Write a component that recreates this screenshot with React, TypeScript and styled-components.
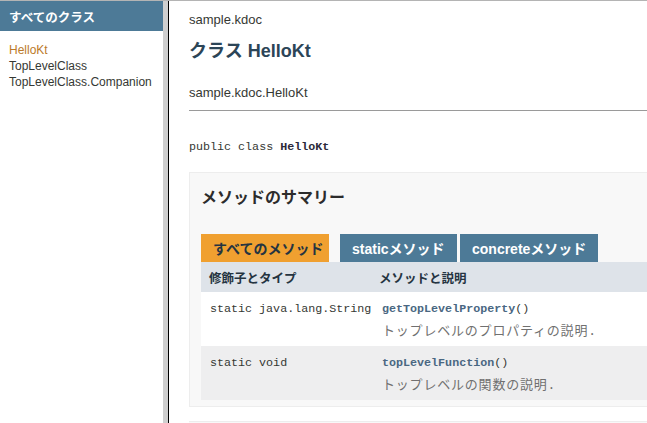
import React from "react";
import styled, { createGlobalStyle } from "styled-components";

const sans = `"Liberation Sans", "Noto Sans CJK JP", sans-serif`;
const mono = `"Liberation Mono", "Noto Sans CJK JP", monospace`;

const Global = createGlobalStyle`
  html, body { margin: 0; padding: 0; overflow: hidden; background: #fff; }
  body { font-family: ${sans}; color: #353833; }
`;

const Page = styled.div`
  display: flex;
  width: 647px;
  height: 423px;
  border-top: 1px solid #b4b4b4;
  box-sizing: border-box;
  overflow: hidden;
`;

const Sidebar = styled.nav`
  width: 163px;
  flex: none;
  display: flex;
  flex-direction: column;
`;

const SideHeader = styled.div`
  height: 30px;
  background: #4d7a97;
  color: #fff;
  font-weight: bold;
  font-size: 12.5px;
  display: flex;
  align-items: center;
  padding-left: 9px;
`;

const ClassList = styled.ul`
  list-style: none;
  margin: 0;
  padding: 11px 0 0 9px;
`;

const ClassItem = styled.li<{ $active?: boolean }>`
  font-size: 12px;
  line-height: 16px;
  color: ${(p) => (p.$active ? "#bb7a2a" : "#353833")};
`;

const Divider = styled.div`
  width: 5px;
  flex: none;
  background: #cfcfcf;
  border-right: 1px solid #000;
`;

const Main = styled.main`
  flex: 1;
  min-width: 0;
  overflow: hidden;
  padding: 11px 0 0 20px;
`;

const PackageLabel = styled.div`
  font-size: 13px;
  line-height: 16px;
  color: #353833;
`;

const Title = styled.h2`
  margin: 12px 0 0;
  font-size: 18px;
  line-height: 22px;
  font-weight: bold;
  color: #2c4557;
`;

const FullName = styled.div`
  margin-top: 23px;
  font-size: 13px;
  line-height: 16px;
  color: #353833;
  padding-bottom: 9px;
  border-bottom: 1px solid #9a9a9a;
`;

const Signature = styled.pre`
  margin: 29px 0 0;
  font-family: ${mono};
  font-size: 11.7px;
  line-height: 15px;
  color: #353833;
`;

const Strong = styled.b`
  color: #2c2a3a;
`;

const SummaryBox = styled.section`
  margin-top: 17px;
  width: 520px;
  background: #f8f8f8;
  border: 1px solid #ededed;
  padding: 15px 0 6px 11px;
`;

const SummaryTitle = styled.h3`
  margin: 0;
  font-size: 16px;
  line-height: 20px;
  font-weight: bold;
  color: #2c2c2c;
`;

const Tabs = styled.div`
  display: flex;
  margin-top: 26px;
  height: 28px;
`;

const Tab = styled.span<{ $active?: boolean; $w: number; $gap: number }>`
  display: flex;
  align-items: center;
  box-sizing: border-box;
  width: ${(p) => p.$w}px;
  margin-right: ${(p) => p.$gap}px;
  padding-left: 12px;
  font-size: 14px;
  font-weight: bold;
  white-space: nowrap;
  background: ${(p) => (p.$active ? "#f0a030" : "#4d7a97")};
  color: ${(p) => (p.$active ? "#253441" : "#fff")};
`;

const Table = styled.div`
  display: grid;
  grid-template-columns: 170px 1fr;
`;

const HeadCell = styled.div<{ $pl: number }>`
  background: #dee3e9;
  height: 30px;
  display: flex;
  align-items: center;
  padding-left: ${(p) => p.$pl}px;
  font-size: 12.5px;
  font-weight: bold;
  color: #253441;
`;

const Cell = styled.div<{ $alt?: boolean; $pl: number }>`
  background: ${(p) => (p.$alt ? "#eeeeef" : "#fff")};
  height: 54px;
  box-sizing: border-box;
  padding: 9px 0 0 ${(p) => p.$pl}px;
`;

const Code = styled.div`
  font-family: ${mono};
  font-size: 11.7px;
  line-height: 16px;
  color: #353833;
  white-space: nowrap;
`;

const MethodLink = styled.a`
  font-family: ${mono};
  font-weight: bold;
  color: #4a6782;
  text-decoration: none;
`;

const Desc = styled.div`
  margin-top: 6px;
  font-family: ${mono};
  font-size: 13px;
  line-height: 17px;
  letter-spacing: 0.8px;
  color: #707070;
  white-space: nowrap;
`;

const NextBox = styled.div`
  margin-top: 14px;
  height: 20px;
  width: 520px;
  border-top: 1px solid #ededed;
  background: #f8f8f8;
`;

const methods = [
  { type: "static java.lang.String", name: "getTopLevelProperty", desc: "トップレベルのプロパティの説明." },
  { type: "static void", name: "topLevelFunction", desc: "トップレベルの関数の説明." },
];

export default function App() {
  return (
    <>
      <Global />
      <Page>
        <Sidebar>
          <SideHeader>すべてのクラス</SideHeader>
          <ClassList>
            <ClassItem $active>HelloKt</ClassItem>
            <ClassItem>TopLevelClass</ClassItem>
            <ClassItem>TopLevelClass.Companion</ClassItem>
          </ClassList>
        </Sidebar>
        <Divider />
        <Main>
          <PackageLabel>sample.kdoc</PackageLabel>
          <Title>クラス HelloKt</Title>
          <FullName>sample.kdoc.HelloKt</FullName>
          <Signature>
            public class <Strong>HelloKt</Strong>
          </Signature>
          <SummaryBox>
            <SummaryTitle>メソッドのサマリー</SummaryTitle>
            <Tabs>
              <Tab $active $w={128} $gap={11}>すべてのメソッド</Tab>
              <Tab $w={117} $gap={3}>staticメソッド</Tab>
              <Tab $w={138} $gap={0}>concreteメソッド</Tab>
            </Tabs>
            <Table>
              <HeadCell $pl={8}>修飾子とタイプ</HeadCell>
              <HeadCell $pl={8}>メソッドと説明</HeadCell>
              {methods.map((m, i) => (
                <React.Fragment key={m.name}>
                  <Cell $alt={i % 2 === 1} $pl={9}>
                    <Code>{m.type}</Code>
                  </Cell>
                  <Cell $alt={i % 2 === 1} $pl={11}>
                    <Code>
                      <MethodLink>{m.name}</MethodLink>()
                    </Code>
                    <Desc>{m.desc}</Desc>
                  </Cell>
                </React.Fragment>
              ))}
            </Table>
          </SummaryBox>
          <NextBox />
        </Main>
      </Page>
    </>
  );
}
